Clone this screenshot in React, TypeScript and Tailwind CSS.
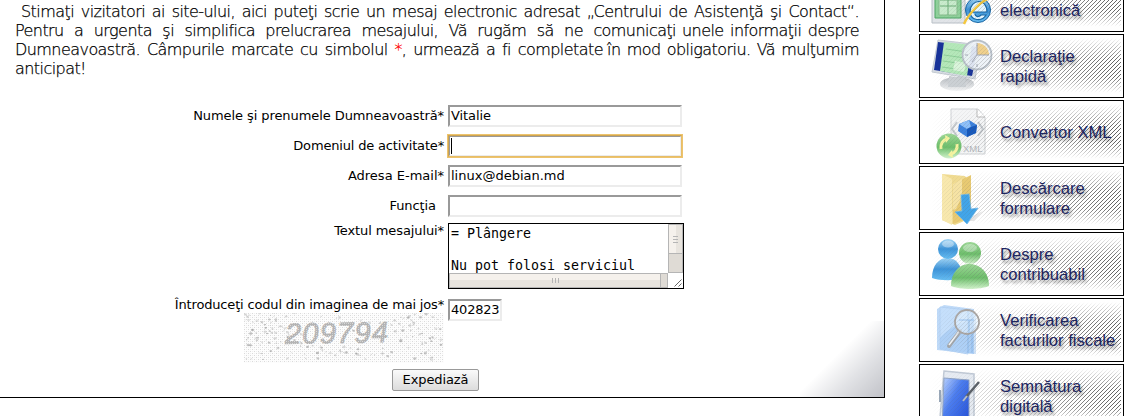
import type { ReactNode } from 'react';

function Seg({ className, children }: { className: string; children: ReactNode }) {
  return (
    <span className={`block shrink-0 whitespace-nowrap text-justify [text-align-last:justify] ${className}`}>
      {children}
    </span>
  );
}

function Intro() {
  return (
    <div className="h-[76px] font-['DejaVu_Sans',sans-serif] text-[16px] leading-[19px] font-extralight tracking-[-0.56px] text-black [-webkit-text-stroke:0.25px_currentColor]">
      <div className="flex pl-[21px]">
        <Seg className="w-[838px]">
          Stimaţi vizitatori ai site-ului, aici puteţi scrie un mesaj electronic adresat „Centrului de Asistenţă şi Contact“.
        </Seg>
      </div>
      <div className="flex gap-[6px] pl-[15px]">
        <Seg className="w-[661px]">Pentru a urgenta şi simplifica prelucrarea mesajului, Vă rugăm să ne comunicaţi</Seg>
        <Seg className="w-[177px]">unele informaţii despre</Seg>
      </div>
      <div className="flex gap-[4px] pl-[15px]">
        <Seg className="w-[588px]">
          Dumneavoastră. Câmpurile marcate cu simbolul <span className="text-[#ff0000]">*</span>, urmează a fi completate
        </Seg>
        <Seg className="w-[252px]">în mod obligatoriu. Vă mulţumim</Seg>
      </div>
      <div className="pl-[15px]">anticipat!</div>
    </div>
  );
}

const bevel = 'border-2 border-t-[#999] border-l-[#999] border-r-[#ececec] border-b-[#ececec] bg-white';

function Row({ label, className, children }: { label: string; className: string; children: ReactNode }) {
  return (
    <div className={`flex gap-[4px] ${className}`}>
      <div className="w-[444px] pt-px text-right leading-[20px] whitespace-pre">{label}</div>
      {children}
    </div>
  );
}

function Field({ value, focused }: { value?: string; focused?: boolean }) {
  return (
    <div
      className={`h-[22px] w-[234px] pl-[1px] leading-[17px] ${bevel} ${
        focused ? 'outline-2 -outline-offset-1 outline-[#e5a92f]/70' : ''
      }`}
    >
      {focused ? <div className="mt-[1px] h-[16px] w-px bg-black" /> : value}
    </div>
  );
}

function MessageBox() {
  return (
    <div className="flex h-[66px] w-[236px] flex-col border border-black bg-white">
      <div className="flex h-[49px] overflow-hidden">
        <div className="w-[219px] overflow-hidden pt-[2px] pl-[2px] font-['DejaVu_Sans_Mono',monospace] text-[13.3px] leading-[16px] whitespace-pre">
          {'= Plângere\n\nNu pot folosi serviciul'}
        </div>
        <div className="flex w-[15px] flex-col border border-[#b5b5b5] bg-[#dfdbd5]">
          <div className="flex h-[29px] flex-col items-center justify-center gap-[2px] border-b border-[#b5b5b5] bg-[linear-gradient(90deg,#f5f1ec_50%,#e8e4de_50%)]">
            <i className="h-px w-[5px] bg-[#b5b5b5]" />
            <i className="h-px w-[5px] bg-[#b5b5b5]" />
            <i className="h-px w-[5px] bg-[#b5b5b5]" />
          </div>
        </div>
      </div>
      <div className="flex h-[15px]">
        <div className="flex w-[219px] border border-[#b5b5b5] bg-[#dfdbd5]">
          <div className="flex w-[211px] items-center justify-center gap-[2px] border-r border-[#b5b5b5] bg-[linear-gradient(180deg,#f5f1ec_50%,#e8e4de_50%)]">
            <i className="h-[5px] w-px bg-[#b5b5b5]" />
            <i className="h-[5px] w-px bg-[#b5b5b5]" />
            <i className="h-[5px] w-px bg-[#b5b5b5]" />
          </div>
        </div>
        <svg className="h-[15px] w-[15px]" viewBox="0 0 15 15">
          <path d="M6.500 13.500L13.500 6.500M10.500 13.500L13.500 10.500" stroke="#555" strokeWidth=".9" />
        </svg>
      </div>
    </div>
  );
}

function makeSpecks() {
  let s = 7193;
  const rnd = () => {
    s = (s * 16807) % 2147483647;
    return s / 2147483647;
  };
  return Array.from({ length: 170 }, () => {
    const edge = rnd() < 0.8;
    let x = rnd() * 197;
    const y = rnd() * 47;
    if (edge && x > 45 && x < 155 && y < 32) x = x < 100 ? x - 42 : x + 45;
    return { x: Math.max(1, Math.min(197, x)), y, w: 1 + rnd() * 1.6, o: 0.2 + rnd() * 0.5 };
  });
}
const specks = makeSpecks();

function Captcha() {
  return (
    <svg className="block h-[50px] w-[200px]" viewBox="0 0 200 50">
      <defs>
        <pattern id="dots" width="4" height="4" patternUnits="userSpaceOnUse">
          <path d="M0 0h1v1h-1zM2 2h1v1h-1z" fill="#dadada" />
          <path d="M2 0h1v1h-1zM0 2h1v1h-1z" fill="#f0f0f0" />
        </pattern>
      </defs>
      <rect width="200" height="50" fill="#fdfdfd" />
      <rect width="200" height="50" fill="url(#dots)" />
      {specks.map((p, i) => (
        <ellipse key={i} cx={p.x} cy={p.y} rx={p.w * 0.65} ry={p.w * 0.5} fill="#999" opacity={p.o} />
      ))}
      <text
        x="41"
        y="30"
        textLength="103"
        fontFamily="Liberation Sans, sans-serif"
        fontSize="29"
        fontStyle="italic"
        fill="#b5b5b5"
        stroke="#b0b0b0"
        strokeWidth=".9"
        transform="rotate(-1 90 20)"
      >
        209794
      </text>
      <rect x="40" y="4" width="108" height="28" fill="url(#dots)" opacity=".65" />
    </svg>
  );
}

function EFiling() {
  return (
    <>
      <path d="M12 10H45V54H12z" fill="#e1e4e8" stroke="#b9c0c7" />
      <path d="M15 12H41V49H15z" fill="#8fd09b" stroke="#4da565" />
      <path d="M19 23h18v23H19z" fill="#c8ebcc" stroke="#84bb8b" />
      <path d="M20 31h16M20 37h16M28 24v22" stroke="#6dac79" />
      <circle cx="58" cy="41" r="12.500" fill="url(#blue)" stroke="#1665a5" />
      <path d="M50 43h17c0-15-17-13-17 0 1 9 12 10 16 3h-5c-3 3-6 1-6-1" fill="#e4f6ff" stroke="#1467a7" strokeWidth="1.200" />
      <path d="M44 55C48 46 61 31 72 28" fill="none" stroke="#f5c83d" strokeWidth="2.500" />
    </>
  );
}

function RapidFiling() {
  return (
    <>
      <ellipse cx="37" cy="49" rx="17" ry="7" fill="url(#steel)" />
      <path d="M29 41l16 2 1 9H28z" fill="#cbd0d4" />
      <path d="M18 5L61 10 55 44 12 37z" fill="#d7dce3" stroke="#c4cbd2" />
      <path d="M18 7L58 12 52 41 14 35z" fill="#173299" />
      <path d="M24 7L52 10 47 41 20 36z" fill="#b4e8b9" />
      <path d="M26 14l21 3M24 20l21 3M23 26l21 3M22 32l21 3" stroke="#8fd09a" strokeWidth="1.200" />
      <path d="M35 26l11 2-2 9-11-2z" fill="#e3f7e3" opacity=".8" />
      <circle cx="57" cy="20" r="14.500" fill="#edf2f8" fillOpacity=".93" stroke="#b9c1ca" strokeWidth="1.800" />
      <path d="M57 20V8a12 12 0 0 1 12 12z" fill="#f0d18d" />
      <path d="M57 8v3M57 29v3M45 20h3M66 20h3M57 20L52 27M57 20V10M57 20h9" stroke="#a2a8b5" />
    </>
  );
}

function XmlIcon() {
  return (
    <>
      <path d="M31 8H58L65 16V53H31z" fill="#f4f5f6" stroke="#cfd2d5" />
      <path d="M57 8v8h8" fill="#fff" stroke="#bbb" />
      <path d="M37 21l-5 7 5 7M58 21l5 7-5 7" fill="none" stroke="#c4c9ce" strokeWidth="2" />
      <path d="M39 23L49 19 57 24 56 32 47 36 38 30z" fill="#3c82df" />
      <path d="M39 23L49 19 51 26 47 28z" fill="#8dc0fa" />
      <path d="M51 26l6-2-1 8-9 4 0-8z" fill="#1659bd" />
      <text x="43" y="51" fontSize="9.500" fontFamily="Liberation Sans, sans-serif" fill="#b2b6ba">
        XML
      </text>
      <circle cx="29" cy="45" r="12.500" fill="url(#green)" />
      <path d="M21 48c-1-5 2-9 6-10M37 43c1 5-2 9-6 10" fill="none" stroke="#f5f3a0" strokeWidth="3" />
      <path d="M25 34l5 3-4 5zM33 57l-5-3 4-5z" fill="#f5f3a0" />
    </>
  );
}

function FolderIcon() {
  return (
    <>
      <path d="M42 54L63 44 54 54z" fill="#999" opacity=".25" />
      <path d="M22 7L45 9 51 17V51L35 58 22 53z" fill="#f0db92" />
      <path d="M33 17L51 8V50L33 57z" fill="#e8ca72" />
      <path d="M22 7L32 12V58L22 53z" fill="#f8e8ad" />
      <path d="M33 17L42 12V29L36 42 33 43z" fill="#f6e3a4" />
      <path d="M41 28L49 27 51 42 58 41 47 57 35 45 42 44z" fill="#41a5e9" stroke="#70baec" strokeWidth=".8" />
    </>
  );
}

function PeopleIcon() {
  return (
    <>
      <path d="M12 45C12 32 19 25 27 25s15 5 15 20c-7 3-22 3-30 0z" fill="url(#blue)" />
      <circle cx="28" cy="16" r="10" fill="url(#blue)" />
      <path d="M31 53C31 40 39 31 49 31s20 7 20 22c-9 4-29 4-38 0z" fill="url(#green)" />
      <circle cx="50" cy="20" r="11" fill="url(#green)" />
      <ellipse cx="50" cy="15" rx="7" ry="4" fill="#fff" opacity=".35" />
      <ellipse cx="28" cy="11" rx="6" ry="3.500" fill="#fff" opacity=".4" />
    </>
  );
}

function InvoiceIcon() {
  return (
    <>
      <path d="M17 10L24 6 54 10V55L17 51z" fill="#a9cdf5" opacity=".75" />
      <path d="M20 8l28 3v44l-28-5z" fill="#c5dffb" stroke="#b4d2f4" />
      <path d="M20 39C34 24 43 25 54 18v37l-34-5z" fill="#9fc7f3" opacity=".6" />
      <path d="M48 12v42M52 12v42M55 14v41" stroke="#8ab6e8" strokeWidth=".8" />
      <path d="M29 47L40 32" stroke="#a3a7ab" strokeWidth="4" strokeLinecap="round" />
      <path d="M29 46L40 31" stroke="#eef1f4" strokeWidth="1.500" />
      <circle cx="47" cy="23" r="12" fill="#e3f1ff" fillOpacity=".6" stroke="#aaa6a4" strokeWidth="1.800" />
      <path d="M39 21h15M49 21v13" stroke="#8ab8ea" strokeWidth=".8" />
    </>
  );
}

function TabletIcon() {
  return (
    <>
      <path d="M24 6L54 9V64H19z" fill="#e6ebf2" stroke="#c1cad6" strokeWidth="1.500" />
      <path d="M24 13L49 15V64H22z" fill="url(#screen)" stroke="#8fa3c4" />
      <path d="M20 25v12" stroke="#99a7b8" strokeWidth="2" />
      <path d="M46 32L59 17" stroke="#5a6068" strokeWidth="2.500" />
      <path d="M43 36L47 31" stroke="#b6bdc5" strokeWidth="2" />
    </>
  );
}

function Card({ lines, icon }: { lines: string[]; icon: ReactNode }) {
  return (
    <a className="relative flex h-[64px] w-[205px] shrink-0 items-center overflow-hidden border border-black bg-white">
      <svg className="absolute inset-0 h-[62px] w-[203px]" viewBox="0 0 203 62">
        {icon}
        <rect width="201" height="62" fill="url(#hatch)" mask="url(#fade)" />
      </svg>
      <span className="relative ml-[80px] pt-px font-['Liberation_Sans',Arial,sans-serif] text-[16.6px] leading-[20px] whitespace-nowrap text-[#1d2560] [text-shadow:2px_3px_3px_rgba(0,0,0,0.4)]">
        {lines.map((l) => (
          <span key={l} className="block min-h-[20px]">
            {l}
          </span>
        ))}
      </span>
    </a>
  );
}

function SharedPaint() {
  return (
    <svg className="absolute h-0 w-0">
      <defs>
        <pattern id="hatch" width="4" height="4" patternUnits="userSpaceOnUse">
          <path d="M3 0h1v1h-1zM2 1h1v1h-1zM1 2h1v1h-1zM0 3h1v1h-1z" fill="#666" shapeRendering="crispEdges" />
        </pattern>
        <linearGradient id="fx">
          <stop offset="0.050" stopColor="#000" />
          <stop offset=".45" stopColor="#666" />
          <stop offset=".95" stopColor="#fff" />
        </linearGradient>
        <linearGradient id="fyb" x2="0" y2="1">
          <stop offset="0.050" stopColor="#000" />
          <stop offset=".4" stopColor="#000" stopOpacity="0" />
          <stop offset=".68" stopColor="#000" stopOpacity="0" />
          <stop offset=".93" stopColor="#000" />
        </linearGradient>
        <mask id="fade" maskUnits="userSpaceOnUse" x="0" y="0" width="203" height="62">
          <rect width="203" height="62" fill="url(#fx)" />
          <rect width="203" height="62" fill="url(#fyb)" />
        </mask>
        <linearGradient id="blue" x2="0" y2="1">
          <stop stopColor="#9fd4f5" />
          <stop offset=".5" stopColor="#3d93d8" />
          <stop offset="1" stopColor="#66bdf2" />
        </linearGradient>
        <linearGradient id="green" x2="0" y2="1">
          <stop stopColor="#9dd897" />
          <stop offset=".55" stopColor="#6dbe6b" />
          <stop offset="1" stopColor="#d2f2cc" />
        </linearGradient>
        <linearGradient id="steel" x2="0" y2="1">
          <stop stopColor="#b7bcc1" />
          <stop offset="1" stopColor="#f2f3f4" />
        </linearGradient>
        <linearGradient id="screen" x2="1" y2="1">
          <stop stopColor="#c0d7ff" />
          <stop offset=".4" stopColor="#4c7def" />
          <stop offset="1" stopColor="#1d49d6" />
        </linearGradient>
      </defs>
    </svg>
  );
}

export default function App() {
  return (
    <div className="flex h-[416px] w-[1142px] overflow-hidden bg-white font-['DejaVu_Sans',sans-serif] text-[13px] text-black">
      <SharedPaint />
      <main className="h-[398px] w-[885px] border-r border-b border-black bg-[linear-gradient(135deg,#fff_44%,#e2e3e6_68%,#c1c2c8_100%)] bg-[length:84px_76px] bg-right-bottom bg-no-repeat pt-[2px]">
        <Intro />
        <form className="pt-[27px]">
          <Row label="Numele şi prenumele Dumneavoastră*" className="h-[30px] tracking-[-0.08px]">
            <Field value="Vitalie" />
          </Row>
          <Row label="Domeniul de activitate*" className="h-[30px] tracking-[-0.17px]">
            <Field focused />
          </Row>
          <Row label="Adresa E-mail*" className="h-[30px]">
            <Field value="linux@debian.md" />
          </Row>
          <Row label={'Funcţia  '} className="h-[28px] tracking-[-0.1px]">
            <Field />
          </Row>
          <div className="flex h-[72px] gap-[4px]">
            <div className="w-[444px] text-right leading-[16px] tracking-[-0.1px]">Textul mesajului*</div>
            <MessageBox />
          </div>
          <div className="flex h-[74px] gap-[4px]">
            <div className="flex w-[444px] flex-col items-end">
              <div className="h-[18px] leading-[19px] tracking-[-0.17px]">Întroduceţi codul din imaginea de mai jos*</div>
              <Captcha />
            </div>
            <div className={`mt-[4px] h-[22px] w-[54px] pl-[1px] leading-[18px] tracking-[-0.2px] ${bevel}`}>402823</div>
          </div>
          <button
            type="button"
            className="ml-[392px] block h-[22px] w-[87px] rounded-[2px] border border-[#999] bg-linear-to-b from-[#fafafa] to-[#dcdcdc] leading-[20px] tracking-[-0.1px]"
          >
            Expediază
          </button>
        </form>
      </main>
      <aside className="-mt-[32px] ml-[34px] flex flex-col gap-[2px]">
        <Card lines={['', 'electronică']} icon={<EFiling />} />
        <Card lines={['Declaraţie', 'rapidă']} icon={<RapidFiling />} />
        <Card lines={['Convertor XML']} icon={<XmlIcon />} />
        <Card lines={['Descărcare', 'formulare']} icon={<FolderIcon />} />
        <Card lines={['Despre', 'contribuabil']} icon={<PeopleIcon />} />
        <Card lines={['Verificarea', 'facturilor fiscale']} icon={<InvoiceIcon />} />
        <Card lines={['Semnătura', 'digitală']} icon={<TabletIcon />} />
      </aside>
    </div>
  );
}
